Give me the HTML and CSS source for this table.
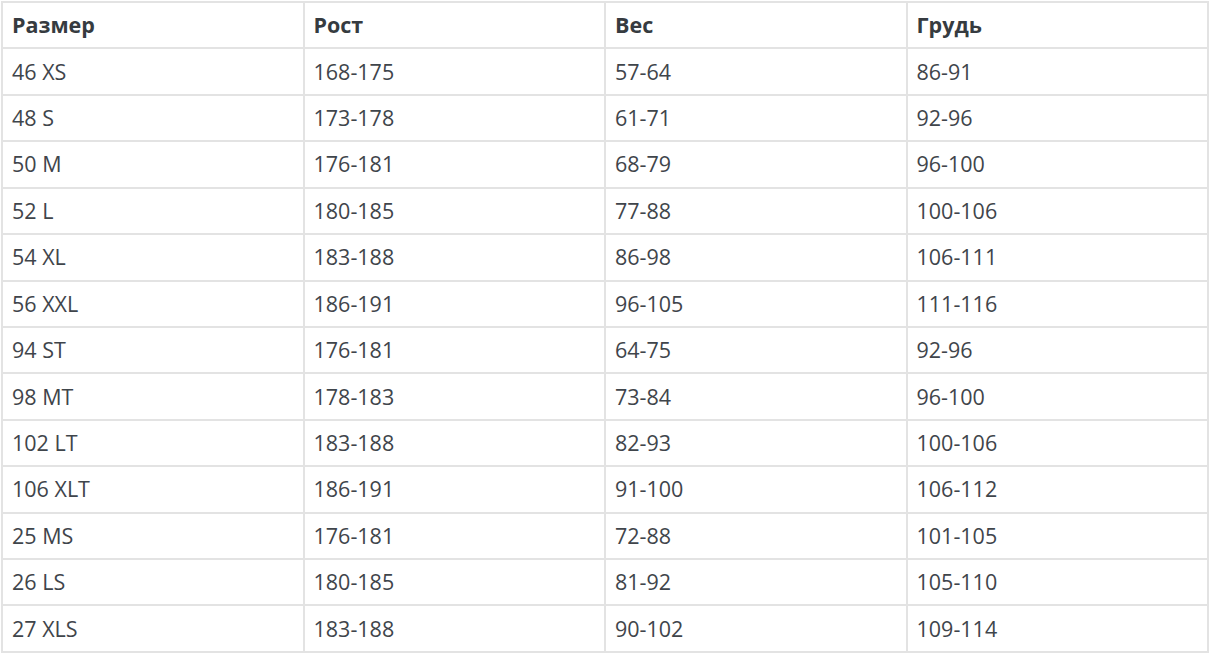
FILE: index.html
```html
<!DOCTYPE html>
<html lang="ru">
<head>
<meta charset="utf-8">
<link rel="stylesheet" href="styles.css">
</head>
<body>
<table class="sizes">
<thead>
<tr><th>Размер</th><th>Рост</th><th>Вес</th><th>Грудь</th></tr>
</thead>
<tbody>
<tr><td>46 XS</td><td>168-175</td><td>57-64</td><td>86-91</td></tr>
<tr><td>48 S</td><td>173-178</td><td>61-71</td><td>92-96</td></tr>
<tr><td>50 M</td><td>176-181</td><td>68-79</td><td>96-100</td></tr>
<tr><td>52 L</td><td>180-185</td><td>77-88</td><td>100-106</td></tr>
<tr><td>54 XL</td><td>183-188</td><td>86-98</td><td>106-111</td></tr>
<tr><td>56 XXL</td><td>186-191</td><td>96-105</td><td>111-116</td></tr>
<tr><td>94 ST</td><td>176-181</td><td>64-75</td><td>92-96</td></tr>
<tr><td>98 MT</td><td>178-183</td><td>73-84</td><td>96-100</td></tr>
<tr><td>102 LT</td><td>183-188</td><td>82-93</td><td>100-106</td></tr>
<tr><td>106 XLT</td><td>186-191</td><td>91-100</td><td>106-112</td></tr>
<tr><td>25 MS</td><td>176-181</td><td>72-88</td><td>101-105</td></tr>
<tr><td>26 LS</td><td>180-185</td><td>81-92</td><td>105-110</td></tr>
<tr><td>27 XLS</td><td>183-188</td><td>90-102</td><td>109-114</td></tr>
</tbody>
</table>
</body>
</html>
```

FILE: styles.css
```css
html, body {
  margin: 0;
  padding: 0;
  background: #ffffff;
}
body {
  padding: 1px 1px 0 1px;
  font-family: "Open Sans", "Liberation Sans", sans-serif;
}
.sizes {
  border-collapse: collapse;
  width: 1208px;
  table-layout: fixed;
  color: #3f454b;
  font-size: 21.5px;
}
.sizes th,
.sizes td {
  border: 2px solid #e3e3e3;
  height: 46.43px;
  padding: 0 9px;
  text-align: left;
  vertical-align: middle;
  line-height: 26px;
  box-sizing: border-box;
}
.sizes th {
  font-weight: 700;
  color: #363b40;
}
.sizes td {
  font-weight: 400;
}
```
